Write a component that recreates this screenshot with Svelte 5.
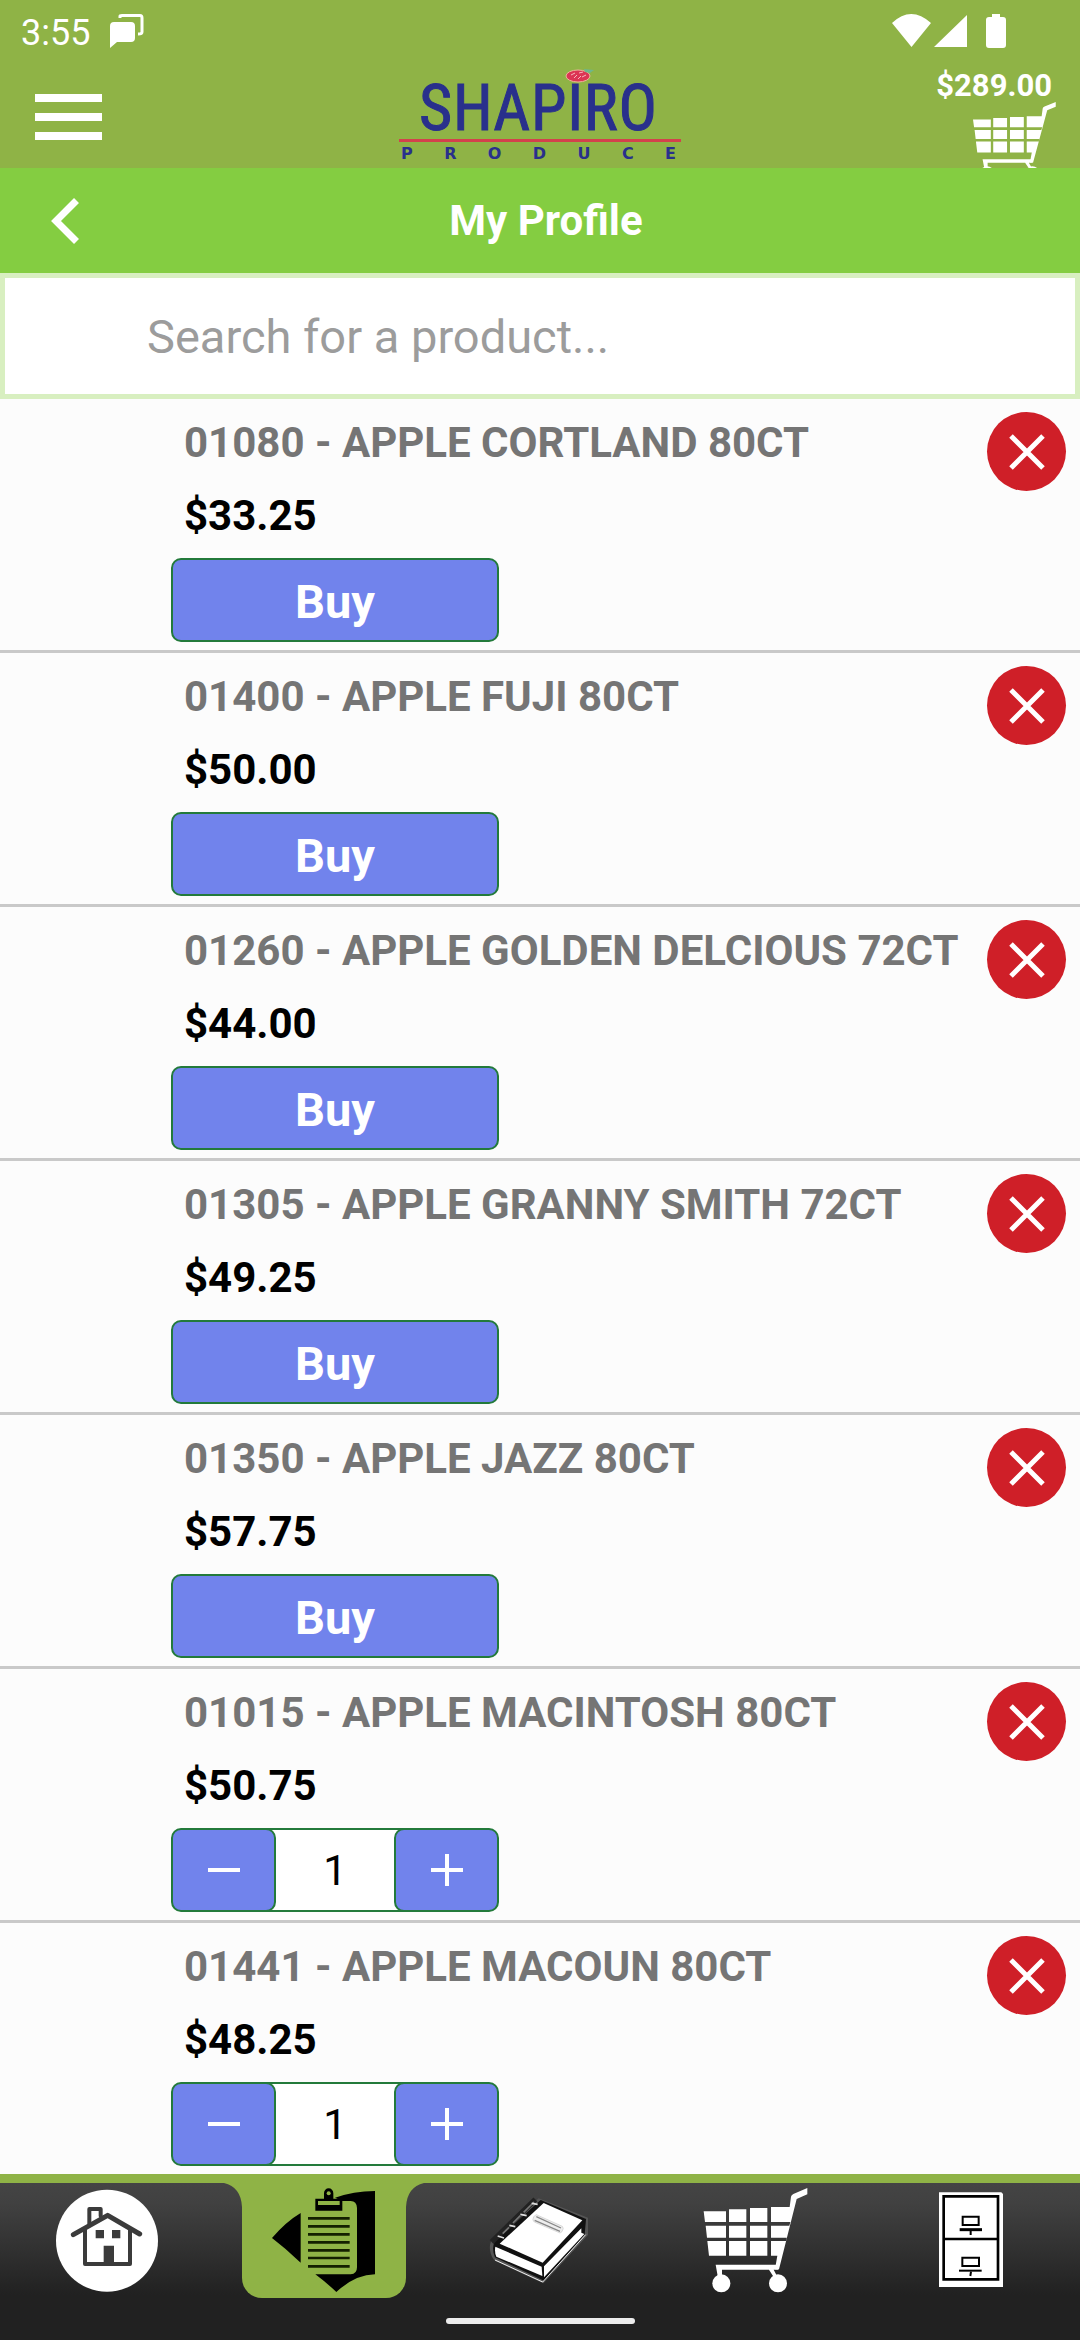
<script lang="ts">
  type Product = { code: string; name: string; price: string; qty: number };

  let products = $state<Product[]>([
    { code: '01080', name: 'APPLE CORTLAND 80CT', price: '$33.25', qty: 0 },
    { code: '01400', name: 'APPLE FUJI 80CT', price: '$50.00', qty: 0 },
    { code: '01260', name: 'APPLE GOLDEN DELCIOUS 72CT', price: '$44.00', qty: 0 },
    { code: '01305', name: 'APPLE GRANNY SMITH 72CT', price: '$49.25', qty: 0 },
    { code: '01350', name: 'APPLE JAZZ 80CT', price: '$57.75', qty: 0 },
    { code: '01015', name: 'APPLE MACINTOSH 80CT', price: '$50.75', qty: 1 },
    { code: '01441', name: 'APPLE MACOUN 80CT', price: '$48.25', qty: 1 }
  ]);

  function remove(code: string) {
    products = products.filter((p) => p.code !== code);
  }
</script>

{#snippet cartShape()}
  <g fill="#fff">
    <path d="M26 94H93V126H30ZM102 88H154V126H102ZM165 84H217V126H165ZM228 81H284L288 50Q289 45 295 42L337 24V43L305 57L252 268H240L247 227H228V183H273L275 173H228V137H283L286 126H228Z" />
    <path d="M32 137H93V173H36ZM102 137H154V173H102ZM165 137H217V173H165ZM37 183H93V227H42ZM102 183H154V227H102ZM165 183H217V227H165Z" />
    <path d="M62 254H250V269H236L246 288H234L222 269H81V288H68Z" />
    <circle cx="79" cy="310" r="27" />
    <circle cx="249" cy="310" r="27" />
  </g>
{/snippet}

<div class="app">
  <header>
    <div class="status">
      <span class="clock">3:55</span>
      <svg class="chat" viewBox="0 0 34 34" aria-hidden="true">
        <path d="M4 8H21Q25 8 25 12V24Q25 28 21 28H7L0 34V12Q0 8 4 8Z" fill="#fff" />
        <path d="M10 4V2Q10 1.500 12 1.500H30Q32 1.500 32 4V18Q32 20 28 20" fill="none" stroke="#fff" stroke-width="3" />
      </svg>
      <svg class="signals" viewBox="0 0 114 34" aria-hidden="true">
        <path d="M0 9Q19 -9 39 9L19.500 33ZM42 33L75 1V33ZM94 6Q94 3 97 3H100V0H108V3H111Q114 3 114 6V31Q114 34 111 34H97Q94 34 94 31Z" fill="#fff" />
      </svg>
    </div>
    <div class="brandbar">
      <button class="menu" aria-label="Menu"><i></i><i></i><i></i></button>
      <div class="logo">
        <div class="shapiro" aria-label="SHAPIRO">
          {#each 'SHAPIRO'.split('') as letter}<span>{letter}</span>{/each}
          <svg class="berry" viewBox="0 0 30 16" aria-hidden="true">
            <ellipse cx="13" cy="9" rx="12" ry="6" fill="#dc3554" stroke="#efb29a" />
            <path d="M6 8L10 6M9 11L12 8M13 12L16 9M14 6L18 5M17 10L21 8" stroke="#f6b8bd" />
            <path d="M19 2L29 3L25 6L20 5Z" fill="#6eb78c" />
          </svg>
        </div>
        <div class="rule"></div>
        <div class="produce" aria-label="PRODUCE">
          {#each 'PRODUCE'.split('') as letter}<span>{letter}</span>{/each}
        </div>
      </div>
      <button class="basket" aria-label="Cart, $289.00">
        <span>$289.00</span>
        <svg viewBox="26 24 312 314" preserveAspectRatio="none" aria-hidden="true">{@render cartShape()}</svg>
      </button>
    </div>
  </header>

  <div class="titlebar">
    <button class="back" aria-label="Back">
      <svg viewBox="0 0 28 46" aria-hidden="true"><path d="M25.500 2.500L5 23L25.500 43.500" fill="none" stroke="#fff" stroke-width="7" /></svg>
    </button>
    <h1>My Profile</h1>
  </div>

  <input class="search" type="search" placeholder="Search for a product..." aria-label="Search for a product" />

  <main>
    <ul>
      {#each products as p (p.code)}
        <li>
          <div class="info">
            <h2>{p.code} - {p.name}</h2>
            <p>{p.price}</p>
            {#if p.qty === 0}
              <button class="buy" onclick={() => (p.qty = 1)}>Buy</button>
            {:else}
              <div class="stepper">
                <button aria-label="Decrease quantity" onclick={() => (p.qty -= 1)}>
                  <svg viewBox="0 0 32 32" aria-hidden="true"><path d="M0 16H32" stroke="#fff" stroke-width="4" /></svg>
                </button>
                <input type="text" inputmode="numeric" aria-label="Quantity" bind:value={p.qty} />
                <button aria-label="Increase quantity" onclick={() => (p.qty += 1)}>
                  <svg viewBox="0 0 32 32" aria-hidden="true"><path d="M0 16H32M16 0V32" stroke="#fff" stroke-width="4" /></svg>
                </button>
              </div>
            {/if}
          </div>
          <button class="remove" aria-label="Remove {p.name}" onclick={() => remove(p.code)}>
            <svg viewBox="0 0 36 36" aria-hidden="true"><path d="M2 2L34 34M34 2L2 34" stroke="#fff" stroke-width="5" /></svg>
          </button>
        </li>
      {/each}
    </ul>
  </main>

  <nav>
    <div class="tabs">
      <a href="#home" aria-label="Home">
        <svg viewBox="153 99 342 342" aria-hidden="true">
          <circle cx="321" cy="272" r="153" fill="#fff" />
          <g fill="none" stroke="#3b3b3b" stroke-linejoin="round" stroke-linecap="round">
            <path d="M220 254L323 196L419 252" stroke-width="15" />
            <path d="M255 240V342H390V240M268 222V177H302V198" stroke-width="12" />
          </g>
          <path d="M287 240H312V265H287ZM336 240H361V265H336ZM311 287H342V342H311Z" fill="#3b3b3b" />
        </svg>
      </a>
      <a href="#profile" class="active" aria-label="My Profile" aria-current="page">
        <svg class="notch left" viewBox="0 0 18 24" aria-hidden="true"><path d="M0 0H18V24Q17 4 0 0Z" /></svg>
        <div class="plate">
          <svg viewBox="801 99 342 342" aria-hidden="true">
            <path d="M816 264Q858 215 902 189V338Q858 296 816 264Z" />
            <path d="M1005 143Q1060 124 1125 123V373Q1065 374 1009 426Q982 400 946 373H1052Q1071 372 1071 352V174Q1070 153 1052 153H1027Z" />
            <path d="M946 146H972V130A14 15 0 0 1 1000 130V146H1027V182H946Z" />
            <path d="M954 153H1019V165H954Z" fill="#8fb346" />
            <circle cx="986" cy="130" r="6" fill="#8fb346" />
            <path d="M924 205H1049M924 229H1049M924 253H1049M924 277H1049M924 301H1049M924 324H1049M924 349H1049" stroke="#142000" stroke-width="8" />
          </svg>
        </div>
        <svg class="notch right" viewBox="0 0 18 24" aria-hidden="true"><path d="M18 0H0V24Q1 4 18 0Z" /></svg>
      </a>
      <a href="#catalog" aria-label="Catalog">
        <svg viewBox="9 9 342 342" aria-hidden="true">
          <path d="M176 55L324 113V165L190 310L48 244Q34 236 30 210Q27 188 42 170Z" fill="#555" />
          <path d="M182 60L318 117L314 164L192 302L45 232Q34 205 44 185Z" fill="#111" />
          <path d="M191 69L307 121L188 248L59 191Z" fill="#fff" />
          <path d="M46 200L185 260L187 288L49 230Q43 216 46 200Z" fill="#fff" />
          <path d="M192 259L304 145V158L313 162L192 292Z" fill="#fff" />
          <path d="M188 306L317 164M45 240L188 306" fill="none" stroke="#eee" stroke-width="3" />
          <path d="M166 58L35 186" stroke="#222" stroke-width="16" />
          <path d="M162 66L131 97M121 107L99 129M87 142L68 161" stroke="#777" stroke-width="5" />
          <path d="M155 70L173 73M121 103L140 107M88 136L106 140M53 168L72 174" stroke="#ddd" stroke-width="5" />
          <path d="M169 104L247 139Q253 144 246 155L240 159L163 126Q155 121 161 110Z" fill="#eee" stroke="#ccc" stroke-width="2" />
          <path d="M169 110L243 144M164 121L240 154" stroke="#888" stroke-width="4" />
        </svg>
      </a>
      <a href="#cart" aria-label="Cart">
        <svg viewBox="12 9 342 342" aria-hidden="true">{@render cartShape()}</svg>
      </a>
      <a href="#orders" aria-label="Orders">
        <svg viewBox="0 9 342 342" aria-hidden="true">
          <path d="M72 37H259L264 42V321H72Z" fill="#fff" />
          <path d="M86 49H249V298H86ZM86 177H249" fill="none" stroke="#000" stroke-width="8" />
          <path d="M143 110H191V135H143ZM142 233H192V258H142Z" fill="none" stroke="#000" stroke-width="6" />
          <path d="M134 149H201" stroke="#000" stroke-width="9" />
          <path d="M132 272H200" stroke="#000" stroke-width="6" />
          <path d="M167 150V165M168 275L166 288" stroke="#000" stroke-width="6" />
        </svg>
      </a>
    </div>
    <div class="handle"></div>
  </nav>
</div>

<style>
  :global(body) {
    margin: 0;
    background: #fff;
  }
  .app {
    display: flex;
    flex-direction: column;
    height: 100vh;
    font-family: Roboto, 'Liberation Sans', sans-serif;
    background: #fdfdfd;
  }
  .app * {
    box-sizing: border-box;
  }
  button,
  input {
    font: inherit;
    margin: 0;
    padding: 0;
    border: 0;
    background: none;
    border-radius: 0;
  }
  svg {
    display: block;
    flex: none;
  }
  header {
    background: #8fb346;
    flex: none;
  }
  .status {
    display: flex;
    align-items: center;
    height: 60px;
    padding: 4px 74px 2px 21px;
    color: #fff;
    font-size: 36px;
  }
  .clock {
    padding-top: 3px;
  }
  .chat {
    width: 34px;
    height: 34px;
    margin-left: 20px;
  }
  .signals {
    width: 114px;
    height: 34px;
    margin-left: auto;
  }
  .brandbar {
    display: grid;
    grid-template-columns: 1fr 282px 1fr;
    grid-template-rows: 108px;
    overflow: hidden;
  }
  .menu {
    display: flex;
    flex-direction: column;
    gap: 11px;
    width: 67px;
    margin: 34px 0 0 35px;
    align-self: start;
  }
  .menu i {
    width: 100%;
    height: 8px;
    background: #fff;
  }
  .logo {
    align-self: end;
    padding-bottom: 2px;
    color: #29308c;
  }
  .shapiro {
    position: relative;
    display: flex;
    justify-content: space-between;
    margin: 0 24px 5px 20px;
    font: 64px/50px 'Liberation Sans Narrow', 'Roboto Condensed', 'Liberation Sans', sans-serif;
    -webkit-text-stroke: 1px #29308c;
  }
  .berry {
    position: absolute;
    top: -17px;
    left: 146px;
    width: 30px;
    height: 16px;
  }
  .rule {
    height: 3px;
    background: #d3414c;
  }
  .produce {
    display: flex;
    justify-content: space-between;
    padding: 0 5px 0 2px;
    font: bold 16px/24px 'DejaVu Sans', sans-serif;
  }
  .basket {
    justify-self: end;
    align-self: start;
    display: flex;
    flex-direction: column;
    align-items: flex-end;
    margin: 10px 24px 0 0;
    color: #fff;
    font-size: 31px;
    font-weight: 700;
    line-height: 32px;
  }
  .basket span {
    margin-right: 4px;
  }
  .basket svg {
    width: 83px;
    height: 78px;
  }
  .titlebar {
    display: grid;
    grid-template-columns: 1fr auto 1fr;
    align-items: center;
    height: 105px;
    padding-left: 12px;
    flex: none;
    background: #84cd41;
    color: #fff;
  }
  .back {
    justify-self: start;
    padding: 0 20px 0 39px;
  }
  .back svg {
    width: 28px;
    height: 46px;
  }
  h1 {
    margin: 0;
    font-size: 42px;
    font-weight: 700;
    line-height: 50px;
  }
  .search {
    height: 126px;
    width: 100%;
    flex: none;
    padding: 0 40px 0 142px;
    border: 5px solid #d8efc0;
    background: #fff;
    font-size: 47px;
    color: #000;
    appearance: none;
    outline: none;
  }
  .search::placeholder {
    color: #9c9c9c;
    opacity: 1;
  }
  main {
    flex: 1;
    min-height: 0;
    overflow-y: auto;
    scrollbar-width: none;
  }
  ul {
    list-style: none;
    margin: 0;
    padding: 0;
  }
  li {
    display: flex;
    justify-content: space-between;
    height: 254px;
    padding: 13px 14px 0 171px;
    border-bottom: 3px solid #c9c9c9;
    background: #fcfcfc;
  }
  h2,
  p {
    margin: 0;
    padding-left: 13px;
    font-size: 42px;
    font-weight: 700;
    line-height: 62px;
    white-space: nowrap;
  }
  h2 {
    color: #757575;
  }
  p {
    margin: 11px 0;
    color: #000;
  }
  .buy,
  .stepper {
    display: flex;
    align-items: center;
    justify-content: center;
    width: 328px;
    height: 84px;
    border: 2px solid #237a3b;
    border-radius: 10px;
    background: #7183ec;
    color: #fff;
    font-size: 47px;
    font-weight: 700;
  }
  .buy {
    padding-top: 2px;
  }
  .stepper {
    justify-content: space-between;
    border: 0;
    background: #fff;
  }
  .stepper button {
    display: flex;
    align-items: center;
    justify-content: center;
    width: 105px;
    height: 84px;
    flex: none;
    border: 2px solid #237a3b;
    border-radius: 10px;
    background: #7183ec;
  }
  .stepper svg {
    width: 32px;
    height: 32px;
  }
  .stepper input {
    flex: 1;
    min-width: 0;
    height: 84px;
    margin: 0 -10px;
    border: solid #237a3b;
    border-width: 2px 0;
    text-align: center;
    font-size: 42px;
    font-weight: 400;
    color: #000;
  }
  .remove {
    display: flex;
    align-items: center;
    justify-content: center;
    width: 79px;
    height: 79px;
    flex: none;
    border-radius: 50%;
    background: #cf1f28;
  }
  .remove svg {
    width: 36px;
    height: 36px;
  }
  nav {
    flex: none;
    border-top: 9px solid #8fb346;
    background: linear-gradient(#444 0, #414141 20px, #212121 112px, #212121 100%);
    padding-bottom: 16px;
  }
  .tabs {
    display: grid;
    grid-template-columns: repeat(5, 1fr);
  }
  .tabs a {
    display: flex;
    justify-content: center;
    align-items: flex-start;
    height: 114px;
  }
  .tabs a > svg,
  .plate svg {
    width: 114px;
    height: 114px;
  }
  .plate {
    display: flex;
    justify-content: center;
    width: 164px;
    height: 115px;
    border-radius: 0 0 20px 20px;
    background: #8fb346;
  }
  .tabs a > .notch {
    width: 18px;
    height: 24px;
    fill: #8fb346;
  }
  .handle {
    width: 189px;
    height: 6px;
    margin: 21px auto 0;
    border-radius: 3px;
    background: #ececec;
  }
</style>
